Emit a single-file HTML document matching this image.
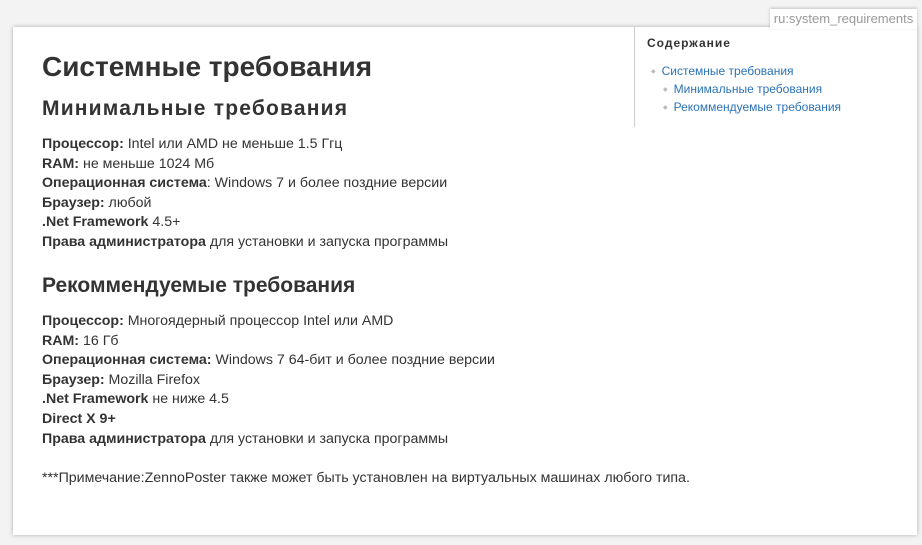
<!DOCTYPE html>
<html><head><meta charset="utf-8"><style>
body{margin:0;width:922px;height:545px;background:#f3f3f3;font-family:"Liberation Sans",Arial,sans-serif;color:#333;position:relative;overflow:hidden}
.tab{position:absolute;left:770px;top:9px;width:147px;height:20px;background:#fff;color:#999;font-size:13px;line-height:20px;text-align:center;box-shadow:0 -1px 3px rgba(0,0,0,.2);z-index:2}
.page{position:absolute;left:13px;top:27px;width:904px;height:508px;background:#fff;box-shadow:0 0 4px rgba(0,0,0,.3)}
.toc{position:absolute;left:621px;top:0;width:283px;height:100px;border-left:1px solid #ccc}
.toc h3{margin:0;position:absolute;left:12px;top:9px;font-size:12px;letter-spacing:1px;font-weight:bold;color:#333}
.toc div{position:absolute;font-size:12px;color:#2b73b7}
.toc div:before{content:"◆";color:#bbb;font-size:6px;position:relative;top:-2px;margin-right:6px}
h1{position:absolute;left:29px;top:24px;margin:0;font-size:28px;font-weight:bold;color:#333}
h2{position:absolute;left:29px;margin:0;font-size:21px;font-weight:bold;color:#333}
.p{position:absolute;left:29px;font-size:14.2px;line-height:19.6px;color:#333}
b{color:#333}
</style></head><body>
<div class="page">
<div class="toc"><h3>Содержание</h3>
<div style="left:16px;top:37px">Системные требования</div>
<div style="left:28px;top:55px">Минимальные требования</div>
<div style="left:28px;top:73px">Рекоммендуемые требования</div>
</div>
<h1>Системные требования</h1>
<h2 style="top:70px;letter-spacing:1.2px">Минимальные требования</h2>
<div class="p" style="top:108px"><b>Процессор:</b> Intel или AMD не меньше 1.5 Ггц<br><b>RAM:</b> не меньше 1024 Мб<br><b>Операционная система</b>: Windows 7 и более поздние версии<br><b>Браузер:</b> любой<br><b>.Net Framework</b> 4.5+<br><b>Права администратора</b> для установки и запуска программы</div>
<h2 style="top:247px">Рекоммендуемые требования</h2>
<div class="p" style="top:285px"><b>Процессор:</b> Многоядерный процессор Intel или AMD<br><b>RAM:</b> 16 Гб<br><b>Операционная система:</b> Windows 7 64-бит и более поздние версии<br><b>Браузер:</b> Mozilla Firefox<br><b>.Net Framework</b> не ниже 4.5<br><b>Direct X 9+</b><br><b>Права администратора</b> для установки и запуска программы</div>
<div class="p" style="top:442px">***Примечание:ZennoPoster также может быть установлен на виртуальных машинах любого типа.</div>
</div>
<div class="tab">ru:system_requirements</div>
</body></html>
